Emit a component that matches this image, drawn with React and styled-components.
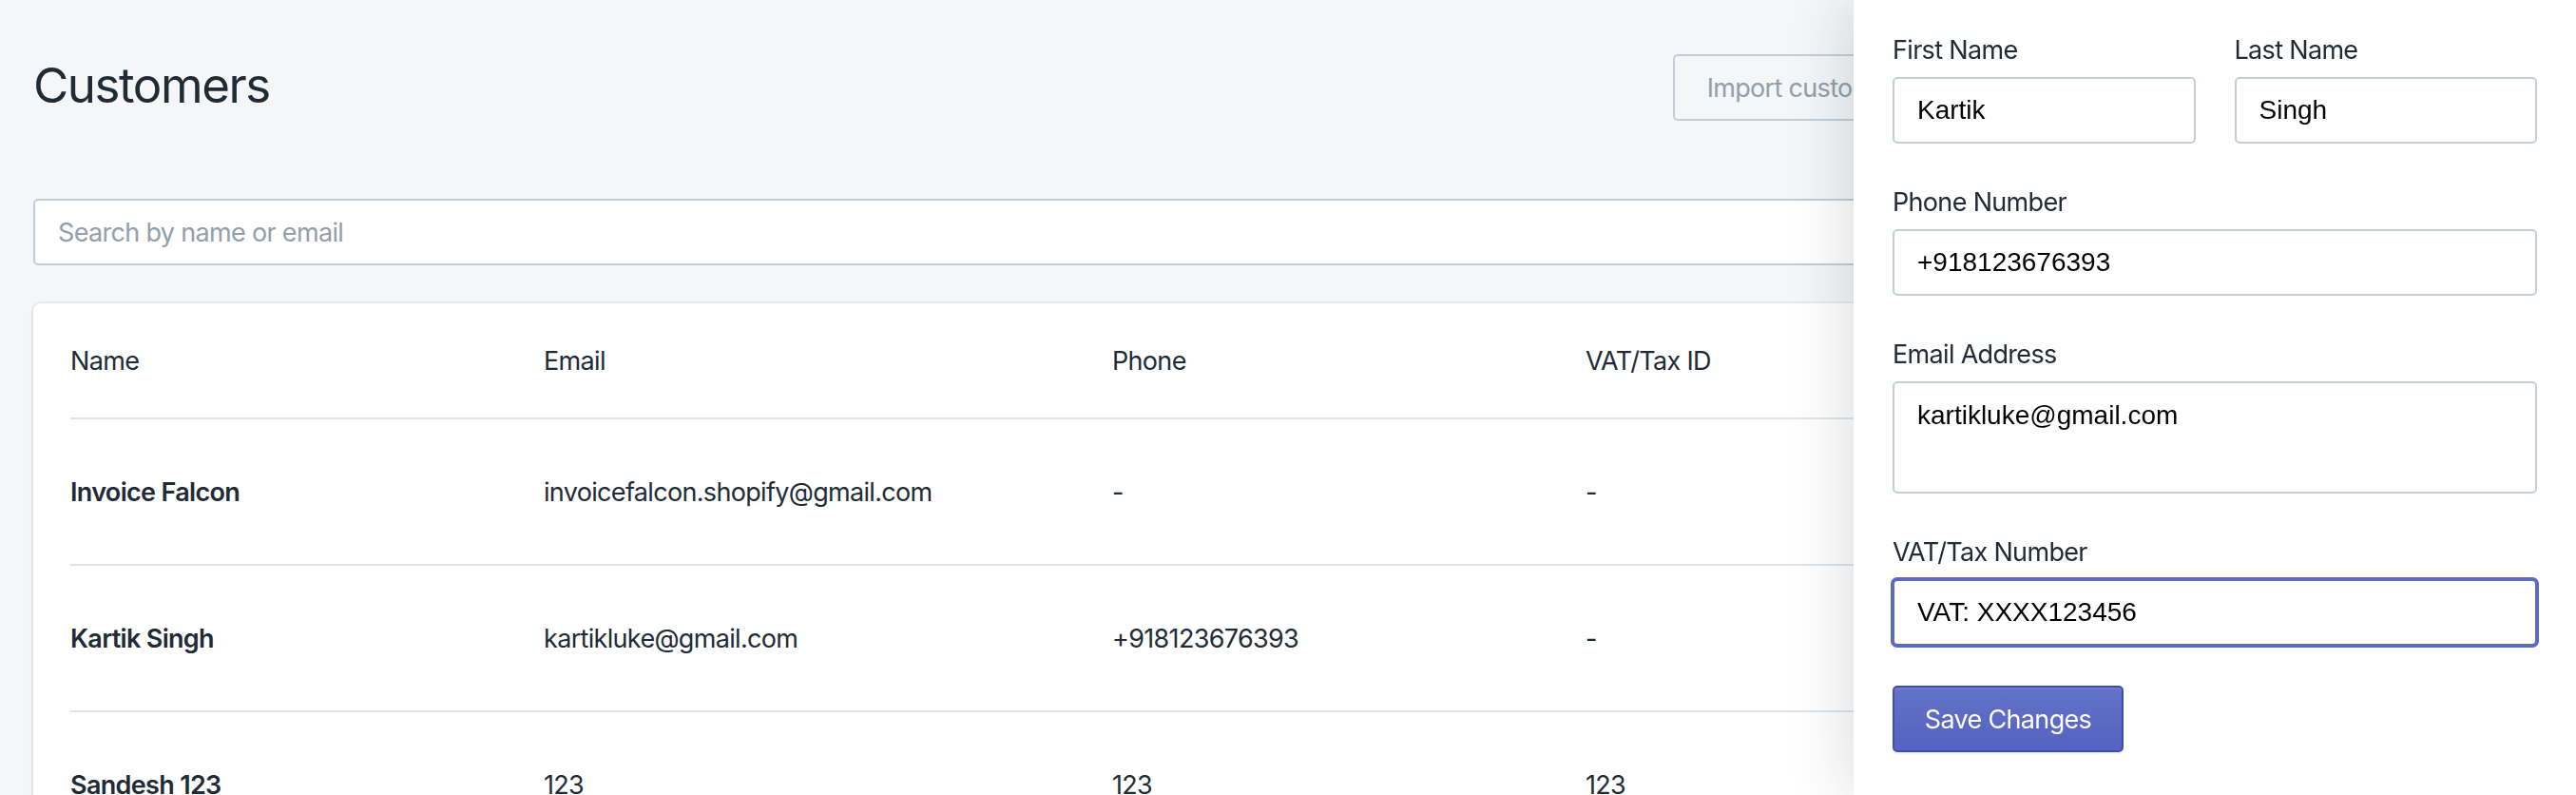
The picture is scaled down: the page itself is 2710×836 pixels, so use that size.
import React from 'react';
import styled, { createGlobalStyle, css } from 'styled-components';

const GlobalStyle = createGlobalStyle`
  html, body {
    margin: 0;
    padding: 0;
    background: #f4f6f8;
    overflow: hidden;
  }
  body {
    font-family: Inter, "Noto Sans", sans-serif;
    color: #212b36;
  }
  * {
    box-sizing: border-box;
  }
`;

const Page = styled.main`
  padding: 57px 35px 0 35px;
  min-height: 836px;
`;

const Header = styled.header`
  display: flex;
  align-items: center;
  justify-content: space-between;
  height: 70px;
`;

const Title = styled.h1`
  margin: 0;
  font-size: 51px;
  line-height: 1;
  font-weight: 400;
  letter-spacing: -0.028em;
  color: #212b36;
  padding-bottom: 5px;
`;

const Actions = styled.div`
  display: flex;
  gap: 50px;
`;

const Button = styled.button`
  height: 70px;
  padding: 0 34px;
  border-radius: 5px;
  font-family: Inter, "Noto Sans", sans-serif;
  font-size: 27px;
  letter-spacing: -0.025em;
  white-space: nowrap;
  cursor: pointer;
  ${p => p.primary ? css`
    background: linear-gradient(180deg, #6371c7, #5563c1);
    border: 2px solid #3f4eae;
    color: #fff;
    box-shadow: inset 0 2px 0 0 #6f7bcb, 0 2px 0 0 rgba(22, 29, 37, 0.05);
  ` : css`
    background: #f4f6f8;
    border: 2px solid #c4cdd5;
    color: #919eab;
  `}
`;

const SaveButton = styled(Button)`
  width: 243px;
  padding: 0;
  display: flex;
  align-items: center;
  justify-content: center;
`;

const Search = styled.input`
  display: block;
  width: 100%;
  height: 70px;
  margin-top: 82px;
  padding: 0 24px;
  border: 2px solid #c4cdd5;
  border-radius: 5px;
  background: #fff;
  font-family: Inter, "Noto Sans", sans-serif;
  font-size: 27px;
  letter-spacing: -0.025em;
  color: #212b36;
  outline: none;
  &::placeholder {
    color: #919eab;
  }
`;

const Card = styled.section`
  margin-top: 40px;
  background: #fff;
  border-radius: 8px;
  padding: 0 39px;
  box-shadow: 0 0 0 2px rgba(63, 63, 68, 0.05), 0 2px 5px 0 rgba(63, 63, 68, 0.12);
`;

const Row = styled.div`
  display: grid;
  grid-template-columns: 498px 598px 498px 1fr;
  align-items: center;
  height: ${p => (p.head ? 122 : 154)}px;
  border-bottom: 2px solid #dfe3e8;
  font-size: 27px;
  letter-spacing: -0.025em;
`;

const Cell = styled.div`
  font-weight: ${p => (p.strong ? 600 : 400)};
  color: #212b36;
  white-space: nowrap;
`;

const Panel = styled.aside`
  position: fixed;
  top: 0;
  right: 0;
  bottom: 0;
  width: 760px;
  background: #fff;
  padding: 35px 41px 0 41px;
  box-shadow: -6px 0 60px rgba(33, 43, 54, 0.16);
`;

const Pair = styled.div`
  display: grid;
  grid-template-columns: 1fr 1fr;
  gap: 41px;
`;

const Field = styled.div`
  margin-bottom: ${p => p.gap ?? 44}px;
`;

const Label = styled.label`
  display: block;
  font-size: 27px;
  line-height: 36px;
  letter-spacing: -0.025em;
  color: #212b36;
  margin-bottom: 10px;
`;

const fieldBox = css`
  display: block;
  width: 100%;
  border: 2px solid #c4cdd5;
  border-radius: 5px;
  background: #fff;
  font-family: "Liberation Sans", Arial, sans-serif;
  font-size: 28px;
  color: #000;
  outline: none;
`;

const TextInput = styled.input`
  ${fieldBox}
  height: 70px;
  padding: 0 24px;
  ${p => p.focused && css`
    border-color: #5c6ac4;
    box-shadow: 0 0 0 2px #5c6ac4;
  `}
`;

const TextArea = styled.textarea`
  ${fieldBox}
  height: 118px;
  padding: 18px 24px;
  resize: none;
  line-height: 1.15;
`;

const customers = [
  { name: 'Invoice Falcon', email: 'invoicefalcon.shopify@gmail.com', phone: '-', vat: '-' },
  { name: 'Kartik Singh', email: 'kartikluke@gmail.com', phone: '+918123676393', vat: '-' },
  { name: 'Sandesh 123', email: '123', phone: '123', vat: '123' },
];

const App = () => {
  return (
    <>
      <GlobalStyle />
      <Page>
        <Header>
          <Title>Customers</Title>
          <Actions>
            <Button disabled>Import customers</Button>
            <Button>Export customers</Button>
            <Button primary>Add customer</Button>
          </Actions>
        </Header>
        <Search placeholder="Search by name or email" />
        <Card>
          <Row head>
            <Cell>Name</Cell>
            <Cell>Email</Cell>
            <Cell>Phone</Cell>
            <Cell>VAT/Tax ID</Cell>
          </Row>
          {customers.map((c, i) => (
            <Row key={i}>
              <Cell strong>{c.name}</Cell>
              <Cell>{c.email}</Cell>
              <Cell>{c.phone}</Cell>
              <Cell>{c.vat}</Cell>
            </Row>
          ))}
        </Card>
      </Page>
      <Panel>
        <Pair>
          <Field>
            <Label>First Name</Label>
            <TextInput defaultValue="Kartik" />
          </Field>
          <Field>
            <Label>Last Name</Label>
            <TextInput defaultValue="Singh" />
          </Field>
        </Pair>
        <Field>
          <Label>Phone Number</Label>
          <TextInput defaultValue="+918123676393" />
        </Field>
        <Field>
          <Label>Email Address</Label>
          <TextArea defaultValue="kartikluke@gmail.com" />
        </Field>
        <Field gap={42}>
          <Label>VAT/Tax Number</Label>
          <TextInput focused defaultValue="VAT: XXXX123456" />
        </Field>
        <SaveButton primary>Save Changes</SaveButton>
      </Panel>
    </>
  );
};

export default App;
